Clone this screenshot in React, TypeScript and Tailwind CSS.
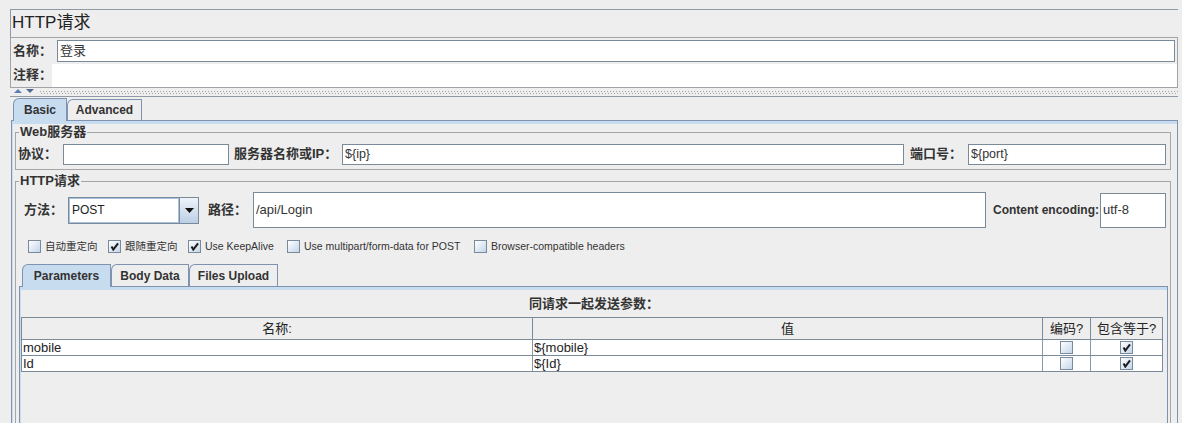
import React from "react";

const FONT = "font-[family-name:'Liberation_Sans','Noto_Sans_CJK_SC',sans-serif]";

function TextBox({ cls, children }: { cls: string; children?: React.ReactNode }) {
  return (
    <div
      className={`${cls} shrink-0 border border-[#7a8a99] bg-white flex items-center pl-[2px] text-[12.5px] font-normal text-[#333] whitespace-nowrap overflow-hidden`}
    >
      {children}
    </div>
  );
}

function Box({ checked }: { checked?: boolean }) {
  return (
    <span className="w-[13px] h-[13px] shrink-0 border border-[#7a8a99] bg-linear-to-br from-white to-[#c3d5ea] flex items-center justify-center">
      {checked && (
        <svg width="9" height="9" viewBox="0 0 9 9">
          <path d="M1.5 4.5 L3.3 7.6 L8 1.3" fill="none" stroke="#1c1c1c" strokeWidth="2" />
        </svg>
      )}
    </span>
  );
}

function Tab({ label, selected, cls }: { label: string; selected?: boolean; cls: string }) {
  return (
    <div
      className={`${cls} border border-b-0 border-[#7f93b0] rounded-tl-[6px] flex items-center justify-center text-[12px] font-bold text-[#333] ${
        selected ? "bg-[#c8dcf0] relative z-10 -mb-px" : "bg-[#eeeeee]"
      }`}
    >
      {label}
    </div>
  );
}

const params = [
  { name: "mobile", value: "${mobile}" },
  { name: "Id", value: "${Id}" },
];

export default function App() {
  return (
    <div className={`w-[1182px] h-[423px] overflow-hidden bg-[#eeeeee] text-[#222] ${FONT}`}>
      <div className="ml-[10px] pt-[9px] w-[1168px]">
        {/* title */}
        <div className="h-[28px] border-t border-l border-[#8f9aa5] flex items-center pl-[1px] pb-[2px] text-[17px] text-[#222]">
          HTTP请求
        </div>

        {/* name / comment */}
        <div className="h-[51px] border border-[#a0a4a8]">
          <div className="h-[25px] flex items-center">
            <div className="w-[46px] pl-[2px] text-[13px] font-bold text-[#333]">名称：</div>
            <TextBox cls="flex-1 mr-[2px] h-[22px] !shrink">
              <span className="text-[13px]">登录</span>
            </TextBox>
          </div>
          <div className="h-[24px] flex items-start pt-[1px]">
            <div className="w-[41px] h-[22px] flex items-center pl-[2px] text-[13px] font-bold text-[#333]">注释：</div>
            <div className="flex-1 h-[23px] bg-white" />
          </div>
        </div>

        {/* divider */}
        <div className="h-[8px] flex items-center">
          <svg width="24" height="6" viewBox="0 0 24 6" className="ml-[4px] shrink-0">
            <path d="M0 4 L4 0 L8 4 Z" fill="#5b7fb3" />
            <path d="M12 0 L20 0 L16 4 Z" fill="#4d6a96" />
          </svg>
          <div className="flex-1 ml-[2px] flex flex-col gap-px">
            <div className="h-px bg-[linear-gradient(to_right,#a3a3a3_1px,transparent_1px)] bg-[length:3px_1px]" />
            <div className="h-px bg-[linear-gradient(to_right,transparent_1px,#a3a3a3_1px,#a3a3a3_2px,transparent_2px)] bg-[length:3px_1px]" />
          </div>
        </div>
        <div className="h-px bg-[#8f9aa5]" />

        {/* outer tabs */}
        <div className="h-[23px] flex items-end pl-[3px]">
          <Tab label="Basic" selected cls="w-[54px] h-[23px]" />
          <Tab label="Advanced" cls="w-[75px] h-[21px]" />
        </div>

        {/* outer pane */}
        <div className="ml-px w-[1167px] h-[320px] border border-[#7f93b0]">
          <div className="h-full border-t-[3px] border-l border-[#c8dcf0]">
            {/* Web服务器 */}
            <fieldset className="ml-[2px] mt-px w-[1156px] border border-[#a5a5a5] px-0 pb-[4px]">
              <legend className="ml-[3px] px-[1px] text-[13px] leading-[14px] font-bold text-[#333]">
                Web服务器
              </legend>
              <div className="mt-[4px] h-[22px] flex items-center text-[13px] font-bold text-[#333]">
                <div className="w-[47px] pl-[2px]">协议：</div>
                <TextBox cls="w-[166px] h-[21px]" />
                <div className="w-[113px] pl-[5px] whitespace-nowrap">服务器名称或IP：</div>
                <TextBox cls="w-[562px] h-[21px]">${"{ip}"}</TextBox>
                <div className="w-[64px] pl-[6px]">端口号：</div>
                <TextBox cls="w-[198px] h-[21px]">${"{port}"}</TextBox>
              </div>
            </fieldset>

            {/* HTTP请求 */}
            <fieldset className="ml-[2px] mt-[4px] w-[1156px] h-[260px] border border-[#a5a5a5] px-0">
              <legend className="ml-[3px] px-[1px] text-[13px] leading-[14px] font-bold text-[#333]">
                HTTP请求
              </legend>
              <div className="mt-[4px] h-[36px] flex items-center font-bold text-[#333]">
                <div className="w-[52px] pl-[8px] text-[13px]">方法：</div>
                <div className="w-[131px] h-[27px] shrink-0 border border-[#7a8a99] flex">
                  <div className="flex-1 bg-white border border-[#a8c0e0] flex items-center pl-[2px] text-[12px] font-normal text-[#222]">
                    POST
                  </div>
                  <div className="w-[19px] border-l border-[#7a8a99] bg-linear-to-b from-[#eef3f9] to-[#bccfe6] flex items-center justify-center">
                    <svg width="9" height="5" viewBox="0 0 9 5">
                      <path d="M0 0 L9 0 L4.5 5 Z" fill="#111" />
                    </svg>
                  </div>
                </div>
                <div className="w-[54px] pl-[9px] text-[13px]">路径：</div>
                <TextBox cls="w-[733px] h-[36px]">
                  <span className="text-[13px]">/api/Login</span>
                </TextBox>
                <div className="w-[114px] pl-[7px] text-[12px] whitespace-nowrap">Content encoding:</div>
                <TextBox cls="w-[66px] h-[35px]">
                  <span className="text-[13px]">utf-8</span>
                </TextBox>
              </div>

              {/* checkboxes */}
              <div className="mt-[12px] h-[13px] flex items-center pl-[12px] text-[10.5px] text-[#333]">
                <div className="w-[80px] flex items-center gap-[4px]">
                  <Box />
                  <span>自动重定向</span>
                </div>
                <div className="w-[80px] flex items-center gap-[4px]">
                  <Box checked />
                  <span>跟随重定向</span>
                </div>
                <div className="w-[99px] flex items-center gap-[4px]">
                  <Box checked />
                  <span>Use KeepAlive</span>
                </div>
                <div className="w-[187px] flex items-center gap-[4px]">
                  <Box />
                  <span className="whitespace-nowrap">Use multipart/form-data for POST</span>
                </div>
                <div className="flex items-center gap-[4px]">
                  <Box />
                  <span className="whitespace-nowrap">Browser-compatible headers</span>
                </div>
              </div>

              {/* inner tabs */}
              <div className="mt-[11px] ml-[6px] h-[22px] flex items-end">
                <Tab label="Parameters" selected cls="w-[89px] h-[23px]" />
                <Tab label="Body Data" cls="w-[78px] h-[22px]" />
                <Tab label="Files Upload" cls="w-[89px] h-[22px]" />
              </div>

              <div className="ml-[3px] w-[1149px] h-[200px] border border-[#7f93b0]">
                <div className="h-full border-t-[3px] border-l border-[#c8dcf0]">
                  <div className="h-[27px] flex items-center justify-center text-[13px] font-bold text-[#333]">
                    同请求一起发送参数：
                  </div>
                  <div className="w-[1142px] border-t border-x border-[#7a8a99] text-[13px] text-[#222]">
                    <div className="grid grid-cols-[510px_509px_47px_71px] gap-x-px bg-[#7a8a99] border-b border-[#7a8a99]">
                      <div className="h-[21px] bg-[#eeeeee] flex items-center justify-center">名称:</div>
                      <div className="h-[21px] bg-[#eeeeee] flex items-center justify-center">值</div>
                      <div className="h-[21px] bg-[#eeeeee] flex items-center justify-center">编码?</div>
                      <div className="h-[21px] bg-[#eeeeee] flex items-center justify-center">包含等于?</div>
                    </div>
                    {params.map((p) => (
                      <div
                        key={p.name}
                        className="grid grid-cols-[510px_509px_47px_71px] gap-x-px bg-[#8a99a6] border-b border-[#7a8a99]"
                      >
                        <div className="h-[15px] bg-white flex items-center pl-px leading-none">{p.name}</div>
                        <div className="h-[15px] bg-white flex items-center pl-px leading-none">{p.value}</div>
                        <div className="h-[15px] bg-white flex items-center justify-center">
                          <Box />
                        </div>
                        <div className="h-[15px] bg-white flex items-center justify-center">
                          <Box checked />
                        </div>
                      </div>
                    ))}
                  </div>
                </div>
              </div>
            </fieldset>
          </div>
        </div>
      </div>
    </div>
  );
}
